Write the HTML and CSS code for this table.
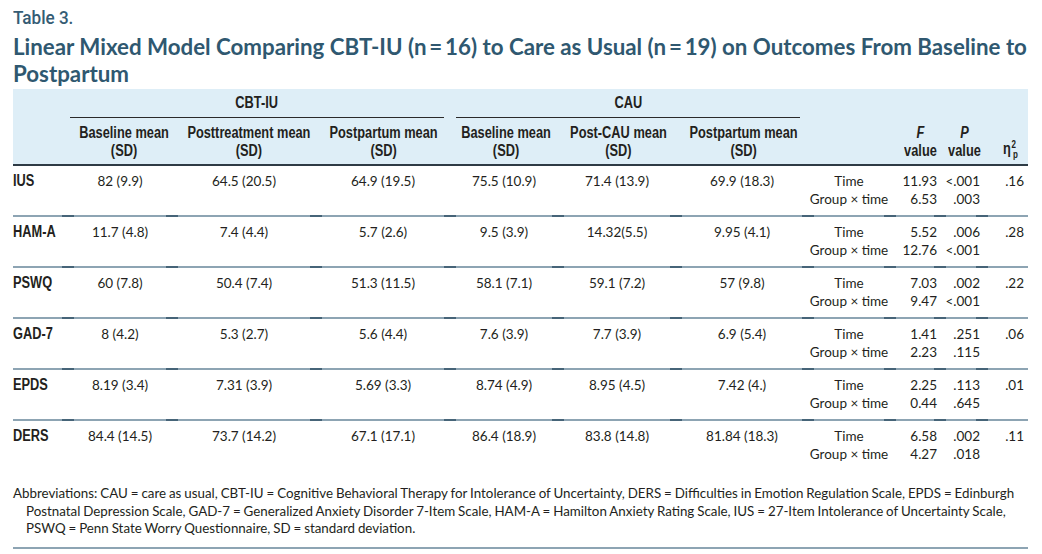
FILE: index.html
```html
<!DOCTYPE html>
<html lang="en">
<head>
<meta charset="utf-8">
<title>Table 3</title>
<link rel="stylesheet" href="styles.css">
</head>
<body>
<div class="page">
  <div class="label"><span class="lc">Table 3.</span></div>
  <h1 class="title">Linear Mixed Model Comparing CBT-IU (n&thinsp;=&thinsp;16) to Care as Usual (n&thinsp;=&thinsp;19) on Outcomes From Baseline to Postpartum</h1>
  <table class="tbl">
    <colgroup>
      <col class="c0"><col class="c1"><col class="c2"><col class="c3"><col class="c4"><col class="c5"><col class="c6"><col class="c7"><col class="c8"><col class="c9"><col class="c10">
    </colgroup>
    <thead>
      <tr class="grp">
        <th></th>
        <th colspan="3" class="g1"><div class="span"><span class="cn">CBT-IU</span></div></th>
        <th colspan="3" class="g2"><div class="span"><span class="cn">CAU</span></div></th>
        <th colspan="4"></th>
      </tr>
      <tr class="sub">
        <th></th>
        <th><span class="cn">Baseline mean<br>(SD)</span></th>
        <th><span class="cn">Posttreatment mean<br>(SD)</span></th>
        <th><span class="cn">Postpartum mean<br>(SD)</span></th>
        <th><span class="cn">Baseline mean<br>(SD)</span></th>
        <th><span class="cn">Post-CAU mean<br>(SD)</span></th>
        <th><span class="cn">Postpartum mean<br>(SD)</span></th>
        <th></th>
        <th class="fh"><span class="cn"><i>F</i><br>value</span></th>
        <th class="ph"><span class="cn"><i>P</i><br>value</span></th>
        <th class="eh"><span class="cn">η<span class="ss"><span class="sp">2</span><span class="sb">p</span></span></span></th>
      </tr>
    </thead>
    <tbody>
      <tr>
        <th class="rl"><span class="cl">IUS</span></th>
        <td>82 (9.9)</td><td>64.5 (20.5)</td><td>64.9 (19.5)</td>
        <td>75.5 (10.9)</td><td>71.4 (13.9)</td><td>69.9 (18.3)</td>
        <td class="eff">Time<br>Group × time</td>
        <td class="fv">11.93<br>6.53</td>
        <td class="pv">&lt;.001<br>.003</td>
        <td class="ev">.16</td>
      </tr>
      <tr>
        <th class="rl"><span class="cl">HAM-A</span></th>
        <td>11.7 (4.8)</td><td>7.4 (4.4)</td><td>5.7 (2.6)</td>
        <td>9.5 (3.9)</td><td>14.32(5.5)</td><td>9.95 (4.1)</td>
        <td class="eff">Time<br>Group × time</td>
        <td class="fv">5.52<br>12.76</td>
        <td class="pv">.006<br>&lt;.001</td>
        <td class="ev">.28</td>
      </tr>
      <tr>
        <th class="rl"><span class="cl">PSWQ</span></th>
        <td>60 (7.8)</td><td>50.4 (7.4)</td><td>51.3 (11.5)</td>
        <td>58.1 (7.1)</td><td>59.1 (7.2)</td><td>57 (9.8)</td>
        <td class="eff">Time<br>Group × time</td>
        <td class="fv">7.03<br>9.47</td>
        <td class="pv">.002<br>&lt;.001</td>
        <td class="ev">.22</td>
      </tr>
      <tr>
        <th class="rl"><span class="cl">GAD-7</span></th>
        <td>8 (4.2)</td><td>5.3 (2.7)</td><td>5.6 (4.4)</td>
        <td>7.6 (3.9)</td><td>7.7 (3.9)</td><td>6.9 (5.4)</td>
        <td class="eff">Time<br>Group × time</td>
        <td class="fv">1.41<br>2.23</td>
        <td class="pv">.251<br>.115</td>
        <td class="ev">.06</td>
      </tr>
      <tr>
        <th class="rl"><span class="cl">EPDS</span></th>
        <td>8.19 (3.4)</td><td>7.31 (3.9)</td><td>5.69 (3.3)</td>
        <td>8.74 (4.9)</td><td>8.95 (4.5)</td><td>7.42 (4.)</td>
        <td class="eff">Time<br>Group × time</td>
        <td class="fv">2.25<br>0.44</td>
        <td class="pv">.113<br>.645</td>
        <td class="ev">.01</td>
      </tr>
      <tr>
        <th class="rl"><span class="cl">DERS</span></th>
        <td>84.4 (14.5)</td><td>73.7 (14.2)</td><td>67.1 (17.1)</td>
        <td>86.4 (18.9)</td><td>83.8 (14.8)</td><td>81.84 (18.3)</td>
        <td class="eff">Time<br>Group × time</td>
        <td class="fv">6.58<br>4.27</td>
        <td class="pv">.002<br>.018</td>
        <td class="ev">.11</td>
      </tr>
    </tbody>
  </table>
  <p class="note">Abbreviations: CAU = care as usual, CBT-IU = Cognitive Behavioral Therapy for Intolerance of Uncertainty, DERS = Difficulties in Emotion Regulation Scale, EPDS = Edinburgh Postnatal Depression Scale, GAD-7 = Generalized Anxiety Disorder 7-Item Scale, HAM-A = Hamilton Anxiety Rating Scale, IUS = 27-Item Intolerance of Uncertainty Scale, PSWQ = Penn State Worry Questionnaire, SD = standard deviation.</p>
</div>
</body>
</html>
```

FILE: styles.css
```css
* { box-sizing: border-box; }

html, body {
  margin: 0;
  padding: 0;
  background: #ffffff;
}

body {
  font-family: "Lato", "Open Sans", sans-serif;
  color: #231f20;
}

.page {
  width: 1042px;
  padding: 8px 14px 0 13px;
}

.label {
  font-family: "Roboto", "Liberation Sans", sans-serif;
  font-weight: 500;
  font-size: 19px;
  line-height: 20px;
  color: #355c74;
  white-space: nowrap;
}

.lc {
  display: inline-block;
  transform: scaleX(0.9);
  transform-origin: left center;
}

.title {
  margin: 5px -14px 0 0;
  font-family: "Lato", "Open Sans", sans-serif;
  font-weight: 700;
  font-size: 22.3px;
  line-height: 27px;
  color: #2f5870;
  letter-spacing: 0;
}

.tbl {
  margin-top: 2px;
  width: 1015px;
  table-layout: fixed;
  border-collapse: separate;
  border-spacing: 0;
}

.c0 { width: 55px; }
.c1 { width: 104px; }
.c2 { width: 144px; }
.c3 { width: 134px; }
.c4 { width: 108px; }
.c5 { width: 118px; }
.c6 { width: 132px; }
.c7 { width: 82px; }
.c8 { width: 50px; }
.c9 { width: 42px; }
.c10 { width: 46px; }

thead th {
  background: #deeef7;
  font-family: "Liberation Sans", "Arimo", sans-serif;
  font-weight: 700;
  font-size: 16px;
  line-height: 18px;
  text-align: center;
  padding: 0;
  color: #231f20;
  white-space: nowrap;
}

.cn {
  display: inline-block;
  transform: scaleX(0.8);
  transform-origin: center center;
  white-space: nowrap;
}

.grp th {
  padding-top: 5px;
  vertical-align: top;
}

.grp .g1 { padding-left: 2px; padding-right: 6px; }
.grp .g2 { padding-left: 6px; padding-right: 8px; }

.span {
  padding-bottom: 5px;
  border-bottom: 1.5px solid #2a2a2a;
}

.sub th {
  padding-top: 6px;
  padding-bottom: 4px;
  border-bottom: 2px solid #2e3b45;
  vertical-align: bottom;
}

.sub .fh { padding-left: 10px; }
.sub .ph { padding-left: 4px; }
.sub .eh { padding-left: 10px; }

.ss {
  display: inline-flex;
  flex-direction: column;
  vertical-align: 6px;
  line-height: 10px;
  font-size: 10px;
  margin-left: 1px;
}

.sp { text-align: left; }
.sb { text-align: left; padding-left: 2px; }

tbody th, tbody td {
  padding: 6px 0 7px 0;
  vertical-align: top;
  font-size: 13.5px;
  line-height: 18px;
  text-align: center;
  font-weight: 400;
  white-space: nowrap;
  border-bottom: 2px solid transparent;
  background-origin: border-box;
  background-repeat: no-repeat;
  background-position: left bottom;
  background-size: 100% 2px;
  background-image: linear-gradient(to right, #466478 0 6px, #8da4b3 6px calc(100% - 6px), #466478 calc(100% - 6px) 100%);
}

tbody tr:last-child th, tbody tr:last-child td {
  background-image: none;
}

tbody th.rl {
  text-align: left;
  font-family: "Liberation Sans", "Arimo", sans-serif;
  font-weight: 700;
  font-size: 16px;
  background-image: linear-gradient(to right, #8da4b3 0 calc(100% - 6px), #466478 calc(100% - 6px) 100%);
}

tbody tr:last-child th.rl {
  background-image: none;
}

.cl {
  display: inline-block;
  transform: scaleX(0.8);
  transform-origin: left center;
}

tbody td.ev {
  text-align: right;
  padding-right: 4px;
  background-image: linear-gradient(to right, #466478 0 6px, #8da4b3 6px 100%);
}

tbody tr:last-child td.ev {
  background-image: none;
}

tbody td.fv {
  text-align: right;
  padding-right: 3px;
}

tbody td.pv {
  text-align: right;
  padding-right: 2px;
}

.note {
  margin: 13px 0 0 0;
  width: 1015px;
  padding: 0 0 9px 13px;
  text-indent: -13px;
  font-size: 13.35px;
  word-spacing: -0.5px;
  line-height: 17.5px;
  color: #231f20;
  border-bottom: 2px solid #8da4b3;
}
```
